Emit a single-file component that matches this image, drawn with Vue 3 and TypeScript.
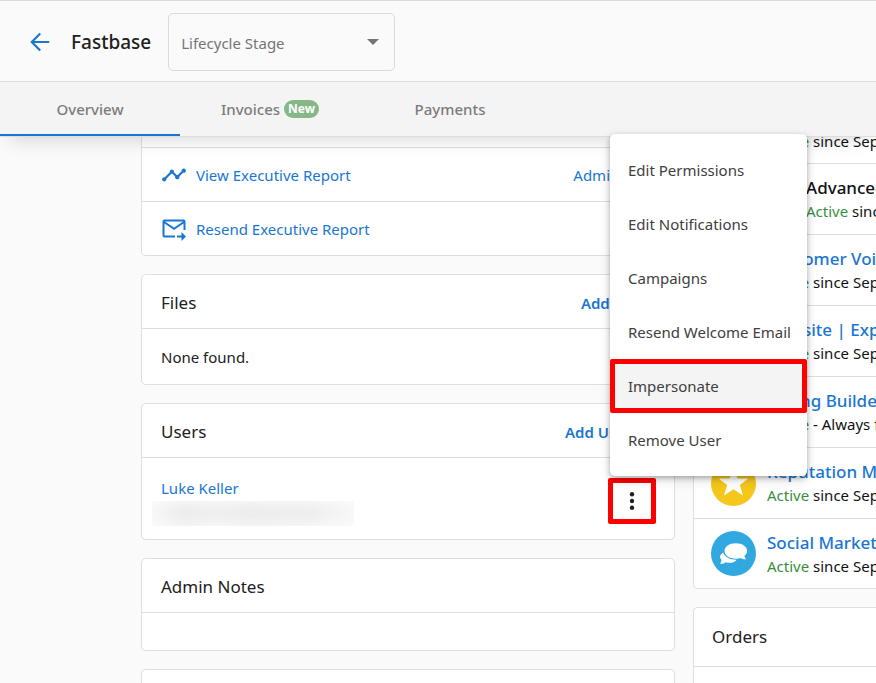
<script setup lang="ts">
import { ref } from 'vue'

interface Product {
  name: string
  status: string
  icon: 'plain' | 'star' | 'chat'
  color: string
  addon?: boolean
}

const stage = ref('')
const tabs = [
  { label: 'Overview', badge: '' },
  { label: 'Invoices', badge: 'New' },
  { label: 'Payments', badge: '' },
]
const activeTab = ref('Overview')

const menuItems = [
  'Edit Permissions',
  'Edit Notifications',
  'Campaigns',
  'Resend Welcome Email',
  'Impersonate',
  'Remove User',
]
const highlighted = 'Impersonate'

const products: Product[] = [
  { name: 'Advertising', status: 'since Sep 2020', icon: 'plain', color: '#4caf50' },
  { name: 'Advanced Reporting', status: 'since Sep 2020', icon: 'plain', color: '#4caf50', addon: true },
  { name: 'Customer Voice', status: 'since Sep 2020', icon: 'plain', color: '#ef6c00' },
  { name: 'Website | Express', status: 'since Sep 2020', icon: 'plain', color: '#5c6bc0' },
  { name: 'Listing Builder', status: '- Always free', icon: 'plain', color: '#26a69a' },
  { name: 'Reputation Management', status: 'since Sep 2020', icon: 'star', color: '#f5c71a' },
  { name: 'Social Marketing', status: 'since Sep 2020', icon: 'chat', color: '#31a8e0' },
]
</script>

<template>
  <div class="page">
    <header class="top">
      <div class="title-bar">
        <button class="back" type="button" aria-label="Back">
          <svg viewBox="0 0 24 24" width="26" height="26"><path d="M20.500 12H4.500M12.200 4.200 4.400 12l7.800 7.800" fill="none" stroke="currentColor" stroke-width="2" /></svg>
        </button>
        <h1>Fastbase</h1>
        <div class="stage">
          <select v-model="stage" aria-label="Lifecycle Stage">
            <option value="">Lifecycle Stage</option>
            <option value="lead">Lead</option>
            <option value="customer">Customer</option>
          </select>
          <svg class="caret" viewBox="0 0 12 6" width="12" height="6"><path d="M0 0h12L6 6z" fill="currentColor" /></svg>
        </div>
      </div>
      <nav class="tabs">
        <button
          v-for="tab in tabs"
          :key="tab.label"
          type="button"
          class="tab"
          :class="{ active: activeTab === tab.label }"
          @click="activeTab = tab.label"
        >
          {{ tab.label }}<span v-if="tab.badge" class="badge">{{ tab.badge }}</span>
        </button>
      </nav>
    </header>

    <main class="content">
      <div class="column">
        <section class="card">
          <div class="row links"></div>
          <div class="row links">
            <a href="#" class="report">
              <svg viewBox="0 0 24 24" width="26" height="26"><path d="M23 8c0 1.100-.9 2-2 2-.18 0-.35-.02-.51-.07l-3.560 3.550c.05.16.07.34.07.52 0 1.100-.9 2-2 2s-2-.9-2-2c0-.18.02-.36.07-.52l-2.550-2.550c-.16.05-.34.07-.52.07s-.36-.02-.52-.07l-4.550 4.560c.05.16.07.33.07.51 0 1.100-.9 2-2 2s-2-.9-2-2 .9-2 2-2c.18 0 .35.02.51.07l4.560-4.550C8.020 9.360 8 9.180 8 9c0-1.100.9-2 2-2s2 .9 2 2c0 .18-.02.36-.07.52l2.550 2.550c.16-.05.34-.07.52-.07s.36.02.52.07l3.550-3.560C19.020 8.350 19 8.180 19 8c0-1.100.9-2 2-2s2 .9 2 2z" fill="currentColor" /></svg>
              View Executive Report
            </a>
            <a href="#">Admin View</a>
          </div>
          <div class="row links">
            <a href="#" class="report">
              <svg viewBox="0 0 26 26" width="26" height="26"><path d="M14 20.500H3.500a1 1 0 0 1-1-1v-14a1 1 0 0 1 1-1h19a1 1 0 0 1 1 1v8.500M3 6l10 6.800L23 6" fill="none" stroke="currentColor" stroke-width="2" /><path d="M16 19.500h4.500V16l4.500 4.500-4.500 4.500v-3.500H16z" fill="currentColor" /></svg>
              Resend Executive Report
            </a>
          </div>
        </section>

        <section class="card">
          <div class="row">
            <h2>Files</h2>
            <a href="#" class="add">Add File</a>
          </div>
          <p class="empty">None found.</p>
        </section>

        <section class="card">
          <div class="row">
            <h2>Users</h2>
            <a href="#" class="add">Add Users</a>
          </div>
          <div class="user">
            <div class="user-info">
              <a href="#">Luke Keller</a>
              <div class="redacted"></div>
            </div>
            <div class="actions">
              <button class="kebab" type="button" aria-label="User actions" aria-haspopup="menu" aria-expanded="true">
                <svg viewBox="0 0 6 20" width="6" height="20"><g fill="currentColor"><circle cx="3" cy="3.300" r="2.200" /><circle cx="3" cy="10" r="2.200" /><circle cx="3" cy="16.700" r="2.200" /></g></svg>
              </button>
              <div class="menu" role="menu">
                <button
                  v-for="item in menuItems"
                  :key="item"
                  type="button"
                  role="menuitem"
                  class="menu-item"
                  :class="{ marked: item === highlighted }"
                >
                  {{ item }}
                </button>
              </div>
            </div>
          </div>
        </section>

        <section class="card">
          <div class="row"><h2>Admin Notes</h2></div>
          <div class="notes"></div>
        </section>

        <section class="card">
          <div class="row"></div>
        </section>
      </div>

      <div class="column side">
        <section class="card">
          <div v-for="product in products" :key="product.name" class="product" :class="{ addon: product.addon }">
            <svg class="logo" viewBox="0 0 45 45" width="45" height="45">
              <circle cx="22.500" cy="22.500" r="22.500" :fill="product.color" />
              <path v-if="product.icon === 'star'" d="m22.500 7.500 4 10h10.800l-8.500 6.600 3.200 10.400-9.500-6.300-9.500 6.300 3.200-10.400-8.500-6.600h10.800z" fill="#fff" />
              <g v-if="product.icon === 'chat'" fill="#fff">
                <path d="M12.300 21.500c-3.300 2-4.200 4.800-1.900 7.200 0 1.700-.5 3-1.400 4.100 2.400.1 4.300-.5 5.800-1.600 4.200 1.300 9 .5 11-2.500-6.500.2-12.200-2.400-13.500-7.200z" />
                <path d="M24.800 12.200c-6.600 0-11.300 3.400-11.300 7.800s4.700 7.700 11.300 7.700c1.700 0 3.300-.2 4.700-.7 1.600 1 3.500 1.500 5.700 1.300-1-1-1.600-2.200-1.700-3.600 1.700-1.300 2.700-2.900 2.700-4.700 0-4.400-4.800-7.800-11.400-7.800z" />
              </g>
            </svg>
            <div class="product-text">
              <a href="#" class="product-name">{{ product.name }}</a>
              <div class="product-status"><span>Active</span> {{ product.status }}</div>
            </div>
          </div>
        </section>
        <section class="card">
          <div class="orders-head"><h2>Orders</h2></div>
          <div class="notes"></div>
        </section>
      </div>
    </main>
  </div>
</template>

<style>
body {
  background: #fafafa;
}
</style>

<style scoped>
* {
  box-sizing: border-box;
}

.page {
  height: 100vh;
  overflow: hidden;
  font-family: 'Segoe UI', 'Noto Sans', sans-serif;
  font-size: 15px;
  line-height: 20px;
  color: #212121;
  background: #fafafa;
}

button,
select {
  font: inherit;
  border: 0;
  margin: 0;
  cursor: pointer;
}

a {
  color: #1976d2;
  text-decoration: none;
}

h1,
h2,
p {
  margin: 0;
}

h2 {
  font-size: 17px;
  line-height: 24px;
  font-weight: 400;
}

.top {
  position: relative;
  z-index: 1;
  background: #fafafa;
  border-top: 1px solid #dadada;
  box-shadow: 0 12px 18px -10px rgba(0, 0, 0, 0.16);
}

.title-bar {
  display: flex;
  align-items: center;
  height: 81px;
  padding: 2px 0 0 27px;
  border-bottom: 1px solid #dedede;
}

.back {
  display: flex;
  padding: 0;
  color: #1976d2;
  background: none;
}

h1 {
  margin-left: 18px;
  font-size: 19px;
  line-height: 28px;
  font-weight: 500;
}

.stage {
  display: grid;
  align-items: center;
  width: 227px;
  margin-left: 17px;
}

.stage select {
  grid-area: 1 / 1;
  height: 58px;
  padding: 2px 40px 0 12px;
  border: 1px solid #dadada;
  border-radius: 5px;
  background: transparent;
  color: #757575;
  appearance: none;
}

.caret {
  grid-area: 1 / 1;
  justify-self: end;
  margin-right: 16px;
  color: #757575;
  pointer-events: none;
}

.tabs {
  display: flex;
  height: 55px;
  background: #f4f4f4;
  border-bottom: 1px solid #dedede;
}

.tab {
  display: flex;
  align-items: center;
  justify-content: center;
  gap: 4px;
  width: 180px;
  padding: 2px 0 0;
  border-bottom: 2px solid transparent;
  background: none;
  color: #7c7c7c;
  font-weight: 500;
}

.tab.active {
  border-bottom-color: #1976d2;
}

.badge {
  padding: 0 4px;
  border-radius: 9px;
  background: #85b787;
  color: #fff;
  font-size: 12px;
  line-height: 18px;
  font-weight: 700;
}

/* The first rows are scrolled under the header. */
.content {
  display: grid;
  grid-template-columns: minmax(0, 534fr) minmax(0, 183fr);
  gap: 18px;
  margin-top: -44px;
  padding-left: 141px;
}

.column {
  display: flex;
  flex-direction: column;
  gap: 18px;
}

.card {
  border: 1px solid #dedede;
  border-radius: 5px;
  background: #fff;
}

.row {
  display: flex;
  align-items: center;
  justify-content: space-between;
  height: 54px;
  padding: 2px 18px 0 19px;
  border-bottom: 1px solid #dedede;
}

.row.links {
  padding-top: 0;
}

.row:last-child {
  height: 53px;
  border-bottom: 0;
}

.report {
  display: flex;
  align-items: center;
  gap: 9px;
}

.add {
  padding-right: 17px;
  font-weight: 600;
}

.empty {
  padding: 18px 19px 17px;
}

.user {
  display: flex;
  align-items: center;
  justify-content: space-between;
  height: 81px;
  padding: 4px 18px 0 10px;
}

.user-info {
  padding-top: 3px;
}

.user-info a {
  padding-left: 9px;
}

.redacted {
  width: 202px;
  height: 25px;
  margin-top: 3px;
  background:
    linear-gradient(rgba(255, 255, 255, 0.4), transparent 40%, transparent 60%, rgba(255, 255, 255, 0.4)),
    linear-gradient(90deg, #f8f8f8, #ededed 15%, #f0f0f0 32%, #ededed 48%, #efefef 80%, #f8f8f8);
}

.actions {
  position: relative;
}

.kebab {
  display: flex;
  align-items: center;
  justify-content: center;
  width: 48px;
  height: 46px;
  padding: 0;
  border: 5px solid #fe0000;
  border-radius: 2px;
  background: #fff;
  color: #212121;
}

.menu {
  position: absolute;
  z-index: 2;
  bottom: calc(100% + 2px);
  left: 2px;
  width: 197px;
  padding: 9px 0;
  border-radius: 5px;
  background: #fff;
  box-shadow: 0 2px 5px rgba(0, 0, 0, 0.25), 0 4px 12px rgba(0, 0, 0, 0.14);
}

.menu-item {
  display: block;
  width: 100%;
  height: 54px;
  padding: 0 18px;
  background: none;
  color: #404040;
  text-align: left;
  white-space: nowrap;
}

.menu-item.marked {
  padding: 0 13px;
  border: 5px solid #fe0000;
  border-radius: 2px;
  background: #f4f4f4;
}

.notes {
  height: 37px;
}

.side .card {
  border-right: 0;
  border-radius: 5px 0 0 5px;
}

.product {
  display: flex;
  align-items: center;
  gap: 11px;
  height: 71px;
  padding-left: 17px;
  border-bottom: 1px solid #dedede;
}

.product:first-child {
  height: 70px;
}

.product:last-child {
  height: 69px;
  border-bottom: 0;
}

.product.addon {
  padding-left: 56px;
}

.logo {
  flex: none;
}

.product-text {
  overflow: hidden;
  white-space: nowrap;
}

.product-name {
  display: block;
  font-size: 17px;
  line-height: 24px;
  font-weight: 500;
}

.addon .product-name {
  color: #111;
}

.product-status {
  line-height: 22px;
  color: #111;
}

.product-status span {
  color: #388e3c;
}

.orders-head {
  display: flex;
  align-items: center;
  height: 59px;
  padding-left: 18px;
  border-bottom: 1px solid #dedede;
}
</style>
